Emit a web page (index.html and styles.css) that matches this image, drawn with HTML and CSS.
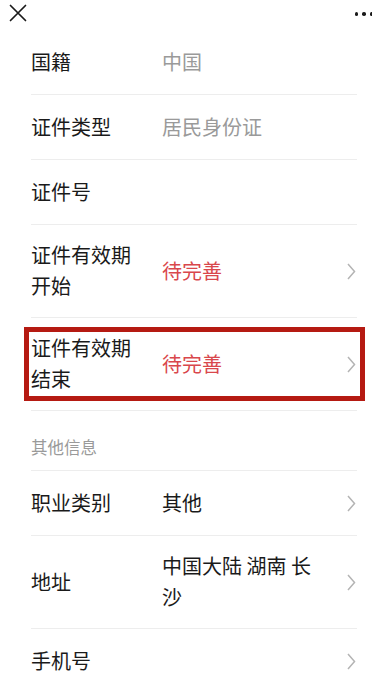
FILE: index.html
```html
<!DOCTYPE html>
<html lang="zh-CN">
<head>
<meta charset="utf-8">
<meta name="viewport" content="width=device-width, initial-scale=1">
<link rel="stylesheet" href="styles.css">
<title>证件信息</title>
</head>
<body>
<div class="page">
  <header class="nav">
    <svg class="close" width="18" height="18" viewBox="0 0 18 18"><path d="M1.5 1.5 L16.5 16.5 M16.5 1.5 L1.5 16.5" stroke="#1a1a1a" stroke-width="1.7" fill="none" stroke-linecap="round"/></svg>
    <div class="more"><span></span><span></span><span></span></div>
  </header>
  <div class="list">
    <div class="row">
      <div class="label">国籍</div>
      <div class="value muted">中国</div>
    </div>
    <div class="row">
      <div class="label">证件类型</div>
      <div class="value muted">居民身份证</div>
    </div>
    <div class="row">
      <div class="label">证件号</div>
      <div class="value muted"></div>
    </div>
    <div class="row tall">
      <div class="label">证件有效期开始</div>
      <div class="value alert">待完善</div>
      <svg class="chev" width="9" height="17" viewBox="0 0 9 17"><path d="M1 1 L7.5 8.5 L1 16" stroke="#b4b4b4" stroke-width="1.5" fill="none"/></svg>
    </div>
    <div class="row tall marked">
      <div class="label">证件有效期结束</div>
      <div class="value alert">待完善</div>
      <svg class="chev" width="9" height="17" viewBox="0 0 9 17"><path d="M1 1 L7.5 8.5 L1 16" stroke="#b4b4b4" stroke-width="1.5" fill="none"/></svg>
      <div class="highlight"></div>
    </div>
    <div class="section">其他信息</div>
    <div class="row">
      <div class="label">职业类别</div>
      <div class="value">其他</div>
      <svg class="chev" width="9" height="17" viewBox="0 0 9 17"><path d="M1 1 L7.5 8.5 L1 16" stroke="#b4b4b4" stroke-width="1.5" fill="none"/></svg>
    </div>
    <div class="row tall">
      <div class="label">地址</div>
      <div class="value">中国大陆 湖南 长沙</div>
      <svg class="chev" width="9" height="17" viewBox="0 0 9 17"><path d="M1 1 L7.5 8.5 L1 16" stroke="#b4b4b4" stroke-width="1.5" fill="none"/></svg>
    </div>
    <div class="row">
      <div class="label">手机号</div>
      <div class="value"></div>
      <svg class="chev" width="9" height="17" viewBox="0 0 9 17"><path d="M1 1 L7.5 8.5 L1 16" stroke="#b4b4b4" stroke-width="1.5" fill="none"/></svg>
    </div>
  </div>
</div>
</body>
</html>
```

FILE: styles.css
```css
* { box-sizing: border-box; }
html, body { margin: 0; padding: 0; background: #fff; }
body {
  font-family: "Noto Sans CJK SC", "Noto Sans", "Liberation Sans", sans-serif;
  color: #1a1a1a;
  overflow: hidden;
}
.page { width: 372px; }
.nav {
  height: 30px;
  display: flex;
  justify-content: space-between;
  align-items: flex-start;
  padding: 4px 0 0 9px;
}
.close { display: block; }
.more {
  display: flex;
  gap: 4px;
  padding-top: 8px;
  margin-right: -1px;
}
.more span {
  width: 3.5px;
  height: 3.5px;
  border-radius: 50%;
  background: #1a1a1a;
}
.list { padding: 0 15px 0 31px; }
.row {
  position: relative;
  display: flex;
  align-items: center;
  min-height: 65px;
  border-bottom: 1px solid #ededed;
  font-size: 20px;
  line-height: 31px;
}
.row > .label, .row > .value { margin-top: -2px; }
.row.tall { min-height: 93px; padding: 15px 0; }
.label {
  width: 110px;
  flex-shrink: 0;
  margin-right: 21px;
  color: #1a1a1a;
}
.value {
  flex: 1;
  padding-right: 18px;
}
.muted { color: #9a9a9a; }
.alert { color: #d9474c; }
.chev { flex-shrink: 0; margin-right: 1px; display: block; }
.section {
  height: 60px;
  display: flex;
  align-items: flex-end;
  padding-bottom: 12px;
  font-size: 16.5px;
  line-height: 22px;
  color: #9a9a9a;
  border-bottom: 1px solid #ededed;
}
.highlight {
  position: absolute;
  left: -7px;
  right: -8px;
  top: 9px;
  height: 74px;
  border: 5px solid #b51a12;
  pointer-events: none;
}
```
